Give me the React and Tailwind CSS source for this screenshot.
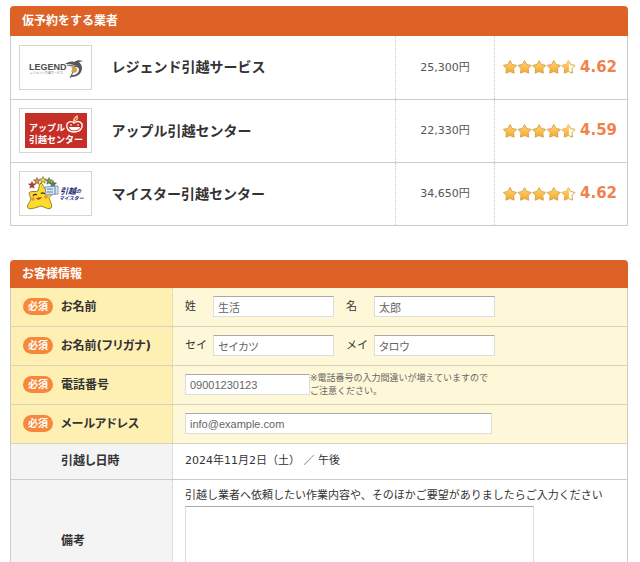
import { useState } from 'react'

function LegendLogo() {
  return (
    <svg className="w-[62px] h-[35px]" viewBox="0 0 62 35" role="img" aria-label="LEGEND">
      <text x="4" y="20" fontSize="9" fontWeight="700" fontFamily="Liberation Sans Narrow, Liberation Sans, sans-serif" fill="#4a4a4d">LEGEND</text>
      <text x="5" y="24" fontSize="3" fontFamily="Noto Sans CJK JP, sans-serif" fill="#77777a">レジェンド引越サービス</text>
      <path d="M40 14c3-2 6-3 9-2 3-2 6-2 9-1l-4 1c3 3 4 6 2 10-2 4-6 5-11 5l2-2c4 0 7-2 7-6-1-3-6-5-14-5z" fill="#55585c" />
      <path d="M46 17c4-1 7 1 6 4-1 2-5 2-6 0 1 0 2-2 0-4z" fill="#d9a03c" />
      <path d="M45 28l3-6M42 15l12 2" stroke="#55585c" strokeWidth="1" fill="none" />
    </svg>
  )
}

function AppleLogo() {
  return (
    <svg className="w-[62px] h-[35px]" viewBox="0 0 62 35" role="img" aria-label="アップル引越センター">
      <rect width="62" height="35" fill="#c62f27" />
      <text x="4" y="18" fontSize="9" fontWeight="700" fontFamily="Noto Sans CJK JP, sans-serif" fill="#fff">アップル</text>
      <text x="4" y="30" fontSize="9" fontWeight="700" fontFamily="Noto Sans CJK JP, sans-serif" fill="#fff">引越センター</text>
      <path d="M42 11c2-3 5-3 7-1 3-2 6-2 8 1 1 4-2 8-8 8s-8-4-7-8z" fill="#c62f27" stroke="#fff" strokeWidth="1.4" />
      <path d="M44 14h11c0 4-11 5-11 0z" fill="#fff" />
      <path d="M45 12h2M52 12h2" stroke="#fff" strokeWidth="1.2" />
      <path d="M49 10c-1-3 0-5 3-7 1 3 0 4-3 5" fill="none" stroke="#f5dc9a" strokeWidth="1.3" />
    </svg>
  )
}

const MINI_STAR = 'M0-3.500l1 2.300 2.500.2-1.900 1.700.6 2.500L0 1.900l-2.200 1.300.6-2.500-1.900-1.700 2.500-.2z'

function MeisterLogo() {
  return (
    <svg className="w-[62px] h-[35px]" viewBox="0 0 62 35" role="img" aria-label="引越のマイスター">
      <path d="M16 7c2 1 3 5 5 7 3 0 7-1 8 1s-4 5-5 7c1 3 4 8 2 10s-7-1-10-2c-3 1-11 4-13 2s2-6 3-9c-1-3-3-6-1-7s6 0 8-1c1-3 1-7 3-8z" fill="#f9dc2c" stroke="#8b7420" strokeWidth=".9" />
      <path d="M8 20c1-2 3-2 4-1M16 18c1-2 3-1 4 0" fill="none" stroke="#333" strokeWidth="1.100" />
      <circle cx="8" cy="23" r="1.800" fill="#ef9248" />
      <circle cx="21" cy="21" r="1.800" fill="#ef9248" />
      <path d="M11 22c2 3 4 2 6-1z" fill="#c43a2a" />
      <g stroke="#5b4a2a" strokeWidth=".5">
        <path d={MINI_STAR} transform="translate(7 9)" fill="#c83232" />
        <path d={MINI_STAR} transform="translate(12 5)" fill="#e58a35" />
        <path d={MINI_STAR} transform="translate(18 4)" fill="#ead23c" />
        <path d={MINI_STAR} transform="translate(24 5)" fill="#5da04d" />
        <path d={MINI_STAR} transform="translate(28 8)" fill="#4a8a55" />
      </g>
      <path d="M20 11l13-1v8l-12 1z" fill="#dbe9f5" stroke="#6583ab" strokeWidth=".8" />
      <path d="M22 13h6M22 16h6M30 11v7" stroke="#4c74b8" strokeWidth=".9" />
      <g fontFamily="Noto Sans CJK JP, sans-serif" fontWeight="700" fontStyle="italic" fill="#262b78">
        <text x="35" y="18" fontSize="8">引越</text>
        <text x="51" y="17" fontSize="5">の</text>
        <text x="34" y="24" fontSize="5">マイスター</text>
      </g>
    </svg>
  )
}

const companies = [
  { name: 'レジェンド引越サービス', price: '25,300円', rating: '4.62', Logo: LegendLogo },
  { name: 'アップル引越センター', price: '22,330円', rating: '4.59', Logo: AppleLogo },
  { name: 'マイスター引越センター', price: '34,650円', rating: '4.62', Logo: MeisterLogo },
]

const STAR = 'M7 .6l2.200 3.900 4.400.9-3 3.200.5 4.600L7 11.500l-4.100 1.700.5-4.600-3-3.200 4.400-.9z'

function Stars() {
  return (
    <svg className="w-[73px] h-[14px] shrink-0" viewBox="0 0 73 14" aria-hidden="true">
      <defs>
        <linearGradient id="star-fill" x1="0" y1="0" x2="0" y2="1">
          <stop offset="0" stopColor="#ffd977" />
          <stop offset="1" stopColor="#f6a62c" />
        </linearGradient>
        <clipPath id="star-half">
          <rect x="0" y="0" width="7.500" height="14" />
        </clipPath>
      </defs>
      {[0, 1, 2, 3].map((i) => (
        <path key={i} d={STAR} transform={`translate(${i * 14.6} 0)`} fill="url(#star-fill)" stroke="#d9a650" strokeWidth="1" strokeLinejoin="round" />
      ))}
      <g transform="translate(58.4 0)">
        <path d={STAR} fill="#fffaf0" stroke="#d9a650" strokeWidth="1" strokeLinejoin="round" />
        <path d={STAR} fill="url(#star-fill)" clipPath="url(#star-half)" />
      </g>
    </svg>
  )
}

function SectionTitle({ id, className, children }) {
  return (
    <h2 id={id} className={`rounded-t bg-[#de6126] px-3 text-xs leading-5 font-bold text-white ${className}`}>
      {children}
    </h2>
  )
}

function FormRow({ label, htmlFor, required, children }) {
  return (
    <div className={`flex border-b ${required ? 'min-h-[39px] border-[#d8d3bb] bg-[#fef8d9]' : 'min-h-9 border-[#ccc] bg-white'}`}>
      <div className={`flex w-[162px] shrink-0 items-center border-r border-dotted pl-3 ${required ? 'border-[#d8cfa5] bg-[#feefb3]' : 'border-[#ccc] bg-[#f4f4f4]'}`}>
        <div className="w-[38px] shrink-0">
          {required && (
            <span className="flex h-[17px] w-[30px] items-center justify-center rounded-full bg-[#f6883a] text-[10px] font-bold text-white">
              必須
            </span>
          )}
        </div>
        <label htmlFor={htmlFor} className="text-xs font-bold whitespace-nowrap [font-feature-settings:'palt']">
          {label}
        </label>
      </div>
      <div className="flex min-w-0 flex-1 items-center px-3">{children}</div>
    </div>
  )
}

const inputClass =
  "h-[21px] rounded-none border border-[#ddd] border-t-[#aaa] bg-white px-1 font-['Liberation_Sans','Noto_Sans_CJK_JP',sans-serif] text-[11px] text-[#666] [font-feature-settings:'palt'] outline-none focus:border-[#f6883a]"

export default function App() {
  const [form, setForm] = useState({
    sei: '生活',
    mei: '太郎',
    seiKana: 'セイカツ',
    meiKana: 'タロウ',
    tel: '09001230123',
    email: 'info@example.com',
    note: '',
  })

  const field = (name) => ({
    id: name,
    name,
    value: form[name],
    onChange: (e) => setForm({ ...form, [name]: e.target.value }),
  })

  return (
    <main className="bg-white pt-1.5 pr-3 pl-2.5 font-['DejaVu_Sans','Noto_Sans_CJK_JP',sans-serif] text-[11px] text-[#333]">
      {/* Companies */}
      <section aria-labelledby="companies-title">
        <SectionTitle id="companies-title" className="py-[5px]">仮予約をする業者</SectionTitle>
        <table className="w-full border-x border-[#ccc]">
          <tbody>
            {companies.map(({ name, price, rating, Logo }) => (
              <tr key={name} className="h-[63px] border-b border-[#ccc]">
                <td className="w-[101px] pl-2">
                  <div className="flex h-[45px] w-[73px] items-center justify-center border border-[#d5d5d5]">
                    <Logo />
                  </div>
                </td>
                <th scope="row" className="text-left text-sm font-bold">{name}</th>
                <td className="w-[99px] border-l border-dotted border-[#ccc] pt-0.5 text-center text-[#555]">{price}</td>
                <td className="w-[133px] border-l border-dotted border-[#ccc] pl-2">
                  <div className="flex items-center gap-1">
                    <Stars />
                    <span className="text-[15px] font-bold text-[#f0834d]">{rating}</span>
                  </div>
                </td>
              </tr>
            ))}
          </tbody>
        </table>
      </section>

      {/* Customer info */}
      <section aria-labelledby="customer-title" className="mt-[34px]">
        <SectionTitle id="customer-title" className="py-1">お客様情報</SectionTitle>
        <form className="border-x border-[#ccc]" onSubmit={(e) => e.preventDefault()}>
          <FormRow label="お名前" htmlFor="sei" required>
            <label htmlFor="sei" className="w-7 shrink-0 pt-0.5">姓</label>
            <input type="text" className={`${inputClass} w-[121px]`} {...field('sei')} />
            <label htmlFor="mei" className="ml-3 w-7 shrink-0 pt-0.5">名</label>
            <input type="text" className={`${inputClass} w-[121px]`} {...field('mei')} />
          </FormRow>
          <FormRow label="お名前(フリガナ)" htmlFor="seiKana" required>
            <label htmlFor="seiKana" className="w-7 shrink-0 pt-0.5">セイ</label>
            <input type="text" className={`${inputClass} w-[121px]`} {...field('seiKana')} />
            <label htmlFor="meiKana" className="ml-3 w-7 shrink-0 pt-0.5">メイ</label>
            <input type="text" className={`${inputClass} w-[121px]`} {...field('meiKana')} />
          </FormRow>
          <FormRow label="電話番号" htmlFor="tel" required>
            <input type="tel" className={`${inputClass} w-[125px] shrink-0`} {...field('tel')} />
            <p className="text-[9px] leading-[13px] text-[#666]">
              ※電話番号の入力間違いが増えていますので
              <br />
              ご注意ください。
            </p>
          </FormRow>
          <FormRow label="メールアドレス" htmlFor="email" required>
            <input type="email" className={`${inputClass} w-[307px]`} {...field('email')} />
          </FormRow>
          <FormRow label="引越し日時">
            <p>2024年11月2日（土） ／ 午後</p>
          </FormRow>
          <FormRow label="備考" htmlFor="note">
            <div className="py-1.5">
              <p className="leading-5">引越し業者へ依頼したい作業内容や、そのほかご要望がありましたらご入力ください</p>
              <textarea className={`${inputClass} block h-[90px] w-[349px] resize-none`} {...field('note')} />
            </div>
          </FormRow>
        </form>
      </section>
    </main>
  )
}
